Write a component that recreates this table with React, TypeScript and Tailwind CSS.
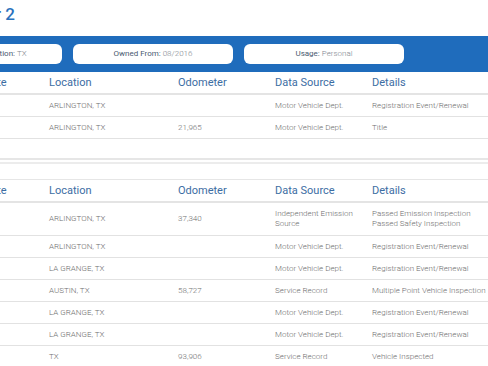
import React from "react";

type Row = {
  date?: string;
  location: string;
  odometer?: string;
  source: string[];
  details: string[];
};

const firstRows: Row[] = [
  { location: "ARLINGTON, TX", source: ["Motor Vehicle Dept."], details: ["Registration Event/Renewal"] },
  { location: "ARLINGTON, TX", odometer: "21,965", source: ["Motor Vehicle Dept."], details: ["Title"] },
];

const secondRows: Row[] = [
  {
    location: "ARLINGTON, TX",
    odometer: "37,340",
    source: ["Independent Emission", "Source"],
    details: ["Passed Emission Inspection", "Passed Safety Inspection"],
  },
  { location: "ARLINGTON, TX", source: ["Motor Vehicle Dept."], details: ["Registration Event/Renewal"] },
  { location: "LA GRANGE, TX", source: ["Motor Vehicle Dept."], details: ["Registration Event/Renewal"] },
  { location: "AUSTIN, TX", odometer: "58,727", source: ["Service Record"], details: ["Multiple Point Vehicle Inspection"] },
  { location: "LA GRANGE, TX", source: ["Motor Vehicle Dept."], details: ["Registration Event/Renewal"] },
  { location: "LA GRANGE, TX", source: ["Motor Vehicle Dept."], details: ["Registration Event/Renewal"] },
  { location: "TX", odometer: "93,906", source: ["Service Record"], details: ["Vehicle Inspected"] },
];

const cols = "grid grid-cols-[109px_129px_97px_97px_1fr]";

function HeaderRow() {
  return (
    <div className={`${cols} h-[23px] pt-[1px] items-center border-b-2 border-[#e4e4e4] text-[11px] text-[#3c6da3]`}>
      <div className="pl-[44px]">Date</div>
      <div>Location</div>
      <div>Odometer</div>
      <div>Data Source</div>
      <div>Details</div>
    </div>
  );
}

function BodyRow({ row }: { row: Row }) {
  const tall = row.source.length > 1 || row.details.length > 1;
  return (
    <div
      className={`${cols} ${tall ? "h-[33px]" : "h-[22px]"} items-center border-b border-[#e2e2e2] text-[8px] leading-[10px] font-light text-[#6e6e6e] whitespace-nowrap`}
    >
      <div className="pl-[44px]">{row.date}</div>
      <div>{row.location}</div>
      <div>{row.odometer}</div>
      <div>
        {row.source.map((s) => (
          <div key={s}>{s}</div>
        ))}
      </div>
      <div>
        {row.details.map((d) => (
          <div key={d}>{d}</div>
        ))}
      </div>
    </div>
  );
}

function Pill({ label, value }: { label: string; value: string }) {
  return (
    <div className="w-[160px] h-[20px] shrink-0 rounded-[6px] bg-white flex items-center justify-center text-[8px] whitespace-nowrap">
      <span className="text-[#4a5a70]">{label}</span>
      <span className="ml-[2px] font-light text-[#80868e]">{value}</span>
    </div>
  );
}

export default function App() {
  return (
    <div className="w-[488px] h-[366px] overflow-hidden bg-white font-['Roboto',sans-serif]">
      <h2 className="-ml-[48px] pt-[4px] h-[36px] text-[17px] leading-[20px] font-medium text-[#2b72bd] whitespace-nowrap">
        Owner 2
      </h2>

      <div className="-ml-[98px] w-[700px] h-[36px] bg-[#1f6cbc] flex items-center gap-[11px]">
        <Pill label="Registration Location:" value="TX" />
        <Pill label="Owned From:" value="08/2016" />
        <Pill label="Usage:" value="Personal" />
      </div>

      <div className="-ml-[60px] w-[600px]">
        <HeaderRow />
        {firstRows.map((r, i) => (
          <BodyRow key={i} row={r} />
        ))}

        <div className="h-[21px] border-b-2 border-[#e6e6e6]" />
        <div className="mt-[2px] h-[17px] border-t-2 border-[#ececec]" />

        <div className="border-t border-[#e6e6e6]">
          <HeaderRow />
          {secondRows.map((r, i) => (
            <BodyRow key={i} row={r} />
          ))}
        </div>
      </div>
    </div>
  );
}
